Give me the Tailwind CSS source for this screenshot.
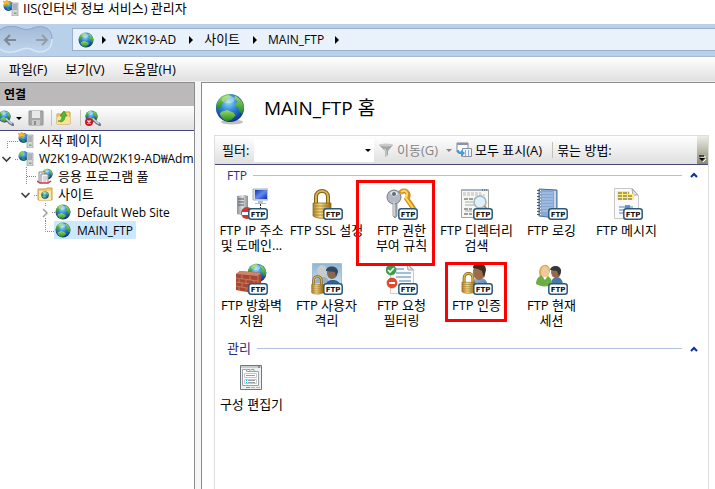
<!DOCTYPE html>
<html lang="ko">
<head>
    <meta charset="UTF-8">
    <meta name="viewport" content="width=device-width, initial-scale=1.0">
    <title>IIS(인터넷 정보 서비스) 관리자</title>
    <script src="https://cdn.jsdelivr.net/npm/@tailwindcss/browser@4"></script>
</head>
<body class="flex flex-col min-h-screen overflow-hidden bg-[#f6f6f6] text-black text-[13px] leading-[15px] font-['Open_Sans','Noto_Sans_CJK_KR',sans-serif]">

    <!-- Shared icon symbols -->
    <svg class="absolute w-0 h-0" aria-hidden="true">
        <defs>
            <radialGradient id="sea" cx="45%" cy="30%" r="70%">
                <stop offset="0" stop-color="#8fdcf8"/>
                <stop offset=".45" stop-color="#2f86d8"/>
                <stop offset="1" stop-color="#102c8c"/>
            </radialGradient>
            <linearGradient id="land" x1="0" y1="0" x2="0" y2="1">
                <stop offset="0" stop-color="#a2dc5a"/>
                <stop offset="1" stop-color="#1c8a28"/>
            </linearGradient>
            <linearGradient id="gold" x1="0" y1="0" x2="1" y2="0">
                <stop offset="0" stop-color="#b08420"/>
                <stop offset=".4" stop-color="#f6dc84"/>
                <stop offset="1" stop-color="#96690f"/>
            </linearGradient>
            <linearGradient id="steel" x1="0" y1="0" x2="1" y2="0">
                <stop offset="0" stop-color="#8a9096"/>
                <stop offset=".5" stop-color="#dde0e3"/>
                <stop offset="1" stop-color="#878d93"/>
            </linearGradient>
            <linearGradient id="screen" x1="0" y1="0" x2="1" y2="1">
                <stop offset="0" stop-color="#1230b8"/>
                <stop offset=".5" stop-color="#5f8cf0"/>
                <stop offset="1" stop-color="#0e2ca8"/>
            </linearGradient>
            <linearGradient id="photo" x1="0" y1="0" x2="0" y2="1">
                <stop offset="0" stop-color="#8fb4d4"/>
                <stop offset="1" stop-color="#d8e8f4"/>
            </linearGradient>
            <linearGradient id="shirt" x1="0" y1="0" x2="1" y2="1">
                <stop offset="0" stop-color="#a8c8e8"/>
                <stop offset="1" stop-color="#3a6a9c"/>
            </linearGradient>
            <linearGradient id="pill" x1="0" y1="0" x2="0" y2="1">
                <stop offset="0" stop-color="#a3bad7"/>
                <stop offset="1" stop-color="#bfd4ec"/>
            </linearGradient>
        </defs>

        <symbol id="globe" viewBox="0 0 32 32">
            <circle cx="16" cy="16" r="15" fill="url(#sea)"/>
            <path d="M3 9C6 4 11 1 15 1l2 3-4 1-1 4-4 2-2 5-4 1C1 14 2 11 3 9z" fill="url(#land)"/>
            <path d="M21 3c5 2 9 7 10 12l-2 7-3-2-1-4-4-3 3-4-3-3z" fill="url(#land)"/>
            <path d="M7 20l6-2 7 3 2 3-5 5-5 1c-4-2-6-5-7-8z" fill="url(#land)"/>
            <ellipse cx="14" cy="7" rx="7" ry="4" fill="#fff" opacity=".35"/>
        </symbol>
        <symbol id="server" viewBox="0 0 16 16">
            <circle cx="5.500" cy="6" r="5" fill="url(#sea)"/>
            <path d="M1 4c1-2 3-3 5-3L5 4 4 6 1 7zM4 8l3 1v2c-2 0-3-1-3-3z" fill="url(#land)"/>
            <path d="M9 3h6v13H9z" fill="#d4d6d8" stroke="#8a8f94" stroke-width=".6"/>
            <path d="M10 5h4M10 7h4M10 9h4" stroke="#777c82" stroke-width=".8"/>
            <path d="M11 12.500h2.500v1.500H11z" fill="#48d040"/>
        </symbol>
        <symbol id="startpage" viewBox="0 0 16 16">
            <use href="#server"/>
            <path d="M0 1l2 .5L4 0l1 2 3 .3-2 1.700-5 1L1 3z" fill="#f8b830" stroke="#d88a10" stroke-width=".4"/>
        </symbol>
        <symbol id="badge" viewBox="0 0 20 12">
            <rect x=".8" y=".8" width="18.400" height="10.400" rx="2.500" fill="#fff" stroke="#2c5878" stroke-width="1.500"/>
            <text x="10" y="9" text-anchor="middle" font-family="DejaVu Sans" font-weight="bold" font-size="7" fill="#111">FTP</text>
        </symbol>
        <symbol id="lock" viewBox="0 0 20 30">
            <path d="M4 15V8c0-8 12-8 12 0v7" fill="none" stroke="#80601a" stroke-width="4"/>
            <path d="M4 15V8c0-8 12-8 12 0v7" fill="none" stroke="#d8b450" stroke-width="2"/>
            <path d="M1 14h18v13c-4 3-14 3-18 0z" fill="url(#gold)" stroke="#80601a" stroke-width=".7"/>
            <path d="M1 17h18M1 20h18M1 23h18M1 26h18" stroke="#96702a" stroke-width=".7"/>
        </symbol>
        <symbol id="plug" viewBox="0 0 16 16">
            <svg x="0" y="0" width="13" height="13"><use href="#globe"/></svg>
            <path d="M8 9l4 4 2 1 2 2" fill="none" stroke="#707a84" stroke-width="3"/>
            <path d="M8 8.500l4 4 2 1" fill="none" stroke="#c8d4dc" stroke-width="1.500"/>
        </symbol>
        <symbol id="crumb" viewBox="0 0 4 8"><path d="M0 0l4 4-4 4z" fill="#000"/></symbol>
        <symbol id="down" viewBox="0 0 6 3"><path d="M0 0h6L3 3z" fill="currentColor"/></symbol>
        <symbol id="up" viewBox="0 0 8 6"><path d="M1 5l3-3 3 3" fill="none" stroke="#0a2ea0" stroke-width="2"/></symbol>
    </svg>

    <!-- Title bar -->
    <header class="flex items-start h-6 bg-white pl-[3px] gap-1">
        <svg class="w-4 h-4"><use href="#startpage"/></svg>
        <h1 class="pt-px">IIS(인터넷 정보 서비스) 관리자</h1>
    </header>

    <!-- Address bar -->
    <div class="flex h-[33px] bg-[#b9d0ea] border-b border-[#a6bad2]">
        <div class="w-[72px] shrink-0 pt-[2px]">
            <svg class="w-[53px] h-[27px]" viewBox="0 0 53 27">
                <path d="M0 4C6-1 15 0 20 2s9 2 13 0 19-4 19 11-14 14-19 11-9-2-13 0-14 4-20-1z" fill="url(#pill)"/>
                <path d="M0 4C6-1 15 0 20 2s9 2 13 0 19-4 19 11" fill="none" stroke="#8ba5c5"/>
                <path d="M52 13c0 15-14 14-19 11s-9-2-13 0-14 4-20-1" fill="none" stroke="#d8e6f5" stroke-width="1.500"/>
                <path d="M16 14H5M10 9l-5 5 5 5" fill="none" stroke="#7f8790" stroke-width="2"/>
                <path d="M36 14h11M42 9l5 5-5 5" fill="none" stroke="#929daa" stroke-width="2"/>
            </svg>
        </div>
        <nav class="flex flex-1 items-center h-[23px] mt-1 pl-[5px] bg-[#e9f1fb] border border-r-0 border-[#9ab0ca]">
            <svg class="w-4 h-4"><use href="#globe"/></svg>
            <svg class="w-1 h-2 ml-2"><use href="#crumb"/></svg>
            <button class="ml-[11px] mb-px text-[12px]">W2K19-AD</button>
            <svg class="w-1 h-2 ml-[13px]"><use href="#crumb"/></svg>
            <button class="ml-[11px] mb-px">사이트</button>
            <svg class="w-1 h-2 ml-[13px]"><use href="#crumb"/></svg>
            <button class="ml-[11px] mb-px text-[12px]">MAIN_FTP</button>
            <svg class="w-1 h-2 ml-[11px]"><use href="#crumb"/></svg>
        </nav>
    </div>

    <!-- Menu bar -->
    <div class="flex items-center gap-[18px] h-[25px] pl-[9px] bg-linear-to-b from-white to-[#e0e0e0] border-b border-[#f0f0f0]">
        <button>파일(F)</button>
        <button>보기(V)</button>
        <button>도움말(H)</button>
    </div>

    <div class="flex flex-1 gap-[6px]">

        <!-- Connections pane -->
        <aside class="w-[195px] shrink-0 overflow-hidden bg-white border-t border-r border-[#8c8c8c]">
            <h2 class="flex items-center h-[23px] pl-1 bg-[#bcb9bb] font-semibold text-[12px]">연결</h2>
            <div class="flex items-center h-[25px] bg-linear-to-b from-white to-[#e2e0e0] border-b border-[#47467a]">
                <button class="flex items-center" aria-label="연결 만들기">
                    <svg class="w-[14px] h-4" viewBox="2 0 14 16"><use href="#plug" width="16" height="16"/></svg>
                    <svg class="w-[6px] h-[3px] ml-[2px]"><use href="#down"/></svg>
                </button>
                <button class="ml-[6px]" aria-label="저장">
                    <svg class="w-4 h-4" viewBox="0 0 16 16">
                        <path d="M1 1h14v14H1z" fill="#a8a8a8" stroke="#949494"/>
                        <path d="M4 1h8v7H4z" fill="#e8e8e8"/>
                        <path d="M4 10h8v5H4z" fill="#c8c8c8"/>
                        <path d="M6 11h2v4H6z" fill="#8e8e8e"/>
                    </svg>
                </button>
                <span class="w-px h-4 ml-[7px] bg-[#c4c2b0]"></span>
                <button class="ml-1" aria-label="위로">
                    <svg class="w-4 h-4" viewBox="0 0 16 16">
                        <path d="M1 4h5l1-2h7v12H1z" fill="#f2d476" stroke="#c8a040"/>
                        <path d="M1 7h13v7H1z" fill="#f8e29a"/>
                        <path d="M2 11c3 0 4-2 4-5H4l4-5 3 5H9c0 5-3 7-7 5z" fill="#52b830" stroke="#34861c" stroke-width=".6"/>
                    </svg>
                </button>
                <span class="w-px h-4 ml-2 bg-[#c4c2b0]"></span>
                <button class="ml-1" aria-label="연결 끊기">
                    <svg class="w-4 h-4" viewBox="0 0 16 16">
                        <use href="#plug"/>
                        <circle cx="4" cy="12" r="4" fill="#c41a20"/>
                        <path d="M2.500 10.500l3 3M5.500 10.500l-3 3" stroke="#fff" stroke-width="1.300"/>
                    </svg>
                </button>
            </div>
            <ul class="whitespace-nowrap">
                <li class="flex items-center h-[18px]">
                    <svg class="w-[18px] h-[18px] shrink-0"><path d="M18 10.500H7.500V18" fill="none" stroke="#888" stroke-dasharray="1 1"/></svg>
                    <svg class="w-4 h-4 shrink-0"><use href="#startpage"/></svg>
                    <a href="#start" class="ml-[5px]">시작 페이지</a>
                </li>
                <li class="flex items-center h-[18px]">
                    <button class="w-[18px] shrink-0" aria-label="W2K19-AD 접기">
                        <svg class="w-[18px] h-[18px]"><path d="M2.500 8l4 4 4-4" fill="none" stroke="#404040" stroke-width="1.700"/><path d="M15 10.500h3" stroke="#888" stroke-dasharray="1 1"/></svg>
                    </button>
                    <svg class="w-4 h-4 shrink-0"><use href="#server"/></svg>
                    <a href="#server-home" class="ml-[5px] text-[12px]">W2K19-AD(W2K19-AD₩Administrator)</a>
                </li>
                <li class="flex items-center h-[18px]">
                    <svg class="w-[37px] h-[18px] shrink-0"><path d="M26.500 0v18M27 9.500h10" fill="none" stroke="#888" stroke-dasharray="1 1"/></svg>
                    <svg class="w-4 h-4 shrink-0" viewBox="0 0 16 16">
                        <svg x="5" y="0" width="11" height="12"><use href="#globe"/></svg>
                        <path d="M2 14V4h6M4 15V6h7v9" fill="#f4f4f8" stroke="#787888" stroke-width=".9"/>
                        <path d="M6 9h4M6 11h4M6 13h3" stroke="#9898a8" stroke-width=".7"/>
                        <path d="M0 13l3 2h8l3-2" fill="none" stroke="#d03a3a" stroke-width="1.500"/>
                    </svg>
                    <a href="#pools" class="ml-[5px]">응용 프로그램 풀</a>
                </li>
                <li class="flex items-center h-[18px]">
                    <button class="w-[37px] shrink-0" aria-label="사이트 접기">
                        <svg class="w-[37px] h-[18px]"><path d="M21.500 8l4 4 4-4" fill="none" stroke="#404040" stroke-width="1.700"/><path d="M34 10.500h3" stroke="#888" stroke-dasharray="1 1"/></svg>
                    </button>
                    <svg class="w-4 h-4 shrink-0" viewBox="0 0 16 16">
                        <path d="M1 3h8l1-1h5v12H1z" fill="#f0cc74" stroke="#c89c48"/>
                        <path d="M2 5h12v9H2z" fill="#fae8b0"/>
                        <svg x="4" y="5" width="8" height="8"><use href="#globe"/></svg>
                    </svg>
                    <a href="#sites" class="ml-[5px]">사이트</a>
                </li>
                <li class="flex items-center h-[18px]">
                    <button class="w-[55px] shrink-0" aria-label="Default Web Site 펼치기">
                        <svg class="w-[55px] h-[18px]"><path d="M43 6l4 4-4 4" fill="none" stroke="#a0a0a0" stroke-width="1.500"/><path d="M45.500 0v3M45.500 15v3M52 9.500h3" stroke="#888" stroke-dasharray="1 1"/></svg>
                    </button>
                    <svg class="w-4 h-4 shrink-0"><use href="#globe"/></svg>
                    <a href="#default" class="ml-[6px] text-[12px]">Default Web Site</a>
                </li>
                <li class="flex items-center h-[18px]">
                    <svg class="w-[54px] h-[18px] shrink-0"><path d="M45.500 0v10.500H54" fill="none" stroke="#888" stroke-dasharray="1 1"/></svg>
                    <a href="#main" class="flex items-center h-[18px] pl-px pr-[3px] bg-[#cce8ff] text-[12px]">
                        <svg class="w-4 h-4 mr-[6px]"><use href="#globe"/></svg>MAIN_FTP
                    </a>
                </li>
            </ul>
        </aside>

        <!-- Feature view -->
        <main class="flex flex-col flex-1 min-w-0 bg-white border-t border-l border-[#8c8c8c] pl-3 pr-[6px]">
            <div class="flex items-center h-[52px] gap-[18px]">
                <svg class="w-8 h-8" viewBox="0 0 32 32">
                    <ellipse cx="18" cy="29" rx="11" ry="2.500" fill="#000" opacity=".25"/>
                    <svg x="1" y="0" width="30" height="30"><use href="#globe"/></svg>
                </svg>
                <h2 class="pb-[2px] text-[19px] leading-6">MAIN_FTP 홈</h2>
            </div>

            <div class="flex-1 border border-b-0 border-[#dedede]">
                <div class="flex items-center h-[29px] whitespace-nowrap bg-linear-to-b from-white to-[#e0dfdf] border-b border-[#47467a]">
                    <label for="filter" class="ml-[7px] w-8 shrink-0">필터:</label>
                    <div class="flex items-center w-[120px] h-[23px] shrink-0 bg-white">
                        <input id="filter" type="text" class="flex-1 min-w-0 h-full px-1 outline-none">
                        <button class="w-[9px]" aria-label="필터 목록"><svg class="w-[6px] h-[3px]"><use href="#down"/></svg></button>
                    </div>
                    <button class="flex items-center ml-1 text-[#858585]">
                        <svg class="w-4 h-4 mr-[3px]" viewBox="0 0 16 16">
                            <path d="M1 3l7-1 7 1-5 6v4l-3 2V9z" fill="#a4a4a4"/>
                            <ellipse cx="8" cy="3" rx="7" ry="1.500" fill="#cacaca"/>
                            <path d="M6 7l2 1v6" fill="none" stroke="#d8d8d8"/>
                        </svg>이동(G)
                        <svg class="w-[6px] h-[3px] ml-2"><use href="#down"/></svg>
                    </button>
                    <button class="flex items-center ml-1">
                        <svg class="w-4 h-4 mr-[3px]" viewBox="0 0 16 16">
                            <path d="M1 1h11v9H1z" fill="#fff" stroke="#7c86a0"/>
                            <path d="M1 1h11v2H1z" fill="#8c94a8"/>
                            <path d="M6.500 6.500h9v8h-9z" fill="#f0f4fa" stroke="#8890a0"/>
                            <path d="M9 9h1M12 9h1M9 11h1M12 11h1M9 13h1M12 13h1" stroke="#3464b4" stroke-width="1.200"/>
                            <path d="M1 8c0 4 2 4 4 4v3l4-4-4-3v2C4 10 3 10 3 8z" fill="#38a0e0"/>
                        </svg>모두 표시(A)
                    </button>
                    <span class="w-px h-4 ml-[10px] bg-[#c4c2b0]"></span>
                    <span class="ml-1">묶는 방법:</span>
                    <button class="flex items-end justify-center w-[11px] h-full ml-auto pb-[2px] bg-linear-to-b from-[#eeeee8] to-[#8c8c74]" aria-label="추가 단추">
                        <svg class="w-[7px] h-[7px]" viewBox="0 0 7 7"><path d="M2 2h5M4 7l3-3" stroke="#fff"/><path d="M0 1h5" stroke="#000" stroke-width="1.200"/><path d="M0 3h6L3 6z" fill="#000"/></svg>
                    </button>
                </div>

                <section>
                    <div class="flex items-center h-5 pl-3 pr-[10px]">
                        <h3 class="text-[12px] text-[#1e3287]">FTP</h3>
                        <span class="flex-1 h-px ml-[6px] mr-2 bg-[#b0bee0]"></span>
                        <button aria-label="FTP 접기"><svg class="w-2 h-[6px]"><use href="#up"/></svg></button>
                    </div>
                    <ul class="flex flex-wrap -ml-px pt-[3px] text-center">
                        <li class="w-[75px] h-[75px]">
                            <a href="#ip" class="flex flex-col items-center">
                                <svg class="w-8 h-8 mb-[3px]" viewBox="0 0 32 32">
                                    <path d="M1 8l8-1 3 1v18l-3 2-8-2z" fill="url(#steel)"/>
                                    <path d="M2 11h6M2 14h6M2 17h6" stroke="#555b60"/>
                                    <path d="M17 1h15v11H17z" fill="#d8dce4" stroke="#a8b0bc"/>
                                    <path d="M19 2h12v9H19z" fill="url(#screen)"/>
                                    <path d="M22 13h5v2h3v1H19v-1h3z" fill="#b8bec8"/>
                                    <path d="M24.500 16v5" stroke="#222" stroke-dasharray="2 1"/>
                                    <circle cx="11" cy="25" r="6" fill="#d03434"/>
                                    <path d="M6 24h8v3H6z" fill="#fff"/>
                                    <svg x="12" y="20" width="20" height="12"><use href="#badge"/></svg>
                                </svg>
                                <span class="whitespace-nowrap">FTP IP 주소<br>및 도메인...</span>
                            </a>
                        </li>
                        <li class="w-[75px] h-[75px]">
                            <a href="#ssl" class="flex flex-col items-center">
                                <svg class="w-8 h-8 mb-[3px]" viewBox="0 0 32 32">
                                    <svg x="1" y="1" width="20" height="30"><use href="#lock"/></svg>
                                    <svg x="12" y="20" width="20" height="12"><use href="#badge"/></svg>
                                </svg>
                                <span class="whitespace-nowrap">FTP SSL 설정</span>
                            </a>
                        </li>
                        <li class="relative w-[75px] h-[75px]">
                            <a href="#auth-rules" class="flex flex-col items-center">
                                <svg class="w-8 h-8 mb-[3px]" viewBox="0 0 32 32">
                                    <path d="M14 5c4-5 11 0 7 6l7 10" fill="none" stroke="#d89018" stroke-width="5"/>
                                    <path d="M15 4c4-3 8 0 5 6l7 10" fill="none" stroke="#ffd860" stroke-width="2"/>
                                    <path d="M7 13h4v15l-2 2-2-2z" fill="#a8aeb8" stroke="#70767e" stroke-width=".7"/>
                                    <circle cx="8" cy="9" r="7" fill="#b4bac4" stroke="#757b84"/>
                                    <path d="M4 5c3-3 7-2 8 1L8 9z" fill="#e8ecf0"/>
                                    <circle cx="8" cy="6" r="2" fill="#606a78"/>
                                    <path d="M8 14v14" stroke="#eef0f4"/>
                                    <svg x="12" y="20" width="20" height="12"><use href="#badge"/></svg>
                                </svg>
                                <span>FTP 권한<br>부여 규칙</span>
                            </a>
                            <span class="absolute -top-2 -left-2 w-[79px] h-[86px] border-3 border-[#ff0000] pointer-events-none"></span>
                        </li>
                        <li class="w-[75px] h-[75px]">
                            <a href="#browse" class="flex flex-col items-center">
                                <svg class="w-8 h-8 mb-[3px]" viewBox="0 0 32 32">
                                    <path d="M.5 1.500h27v28H.5z" fill="#f7f7f4" stroke="#a4a4a0"/>
                                    <path d="M1 1h26v2H1z" fill="#a8b4c0"/>
                                    <path d="M21 2h1M23 2h1M25 2h1" stroke="#304870"/>
                                    <path d="M2 5h18M2 7h22" stroke="#b8b8b0" stroke-dasharray="3 1"/>
                                    <path d="M3 11h11M3 21h8M3 26h8" stroke="#444" stroke-dasharray="4 1"/>
                                    <path d="M4 14h8M4 17h9M4 23h7" stroke="#aaa"/>
                                    <circle cx="19" cy="14" r="6" fill="#e0f0fa" stroke="#9ab4c8" stroke-width="1.500"/>
                                    <path d="M23 18l4 4" stroke="#c89040" stroke-width="2"/>
                                    <svg x="12" y="20" width="20" height="12"><use href="#badge"/></svg>
                                </svg>
                                <span class="whitespace-nowrap">FTP 디렉터리<br>검색</span>
                            </a>
                        </li>
                        <li class="w-[75px] h-[75px]">
                            <a href="#logging" class="flex flex-col items-center">
                                <svg class="w-8 h-8 mb-[3px]" viewBox="0 0 32 32">
                                    <path d="M3 1l18 1v27l-2 1L3 28z" fill="#88a8d4" stroke="#50709c"/>
                                    <path d="M19 3v26" stroke="#dfe6ee" stroke-width="1.500"/>
                                    <path d="M6 5h11M6 8h11M6 11h11M6 14h11M6 17h11M6 20h11M6 23h6" stroke="#b4cae8"/>
                                    <path d="M3 2v27" stroke="#f2f2f2" stroke-width="4" stroke-dasharray="1 2"/>
                                    <path d="M2.500 2v27" stroke="#505860" stroke-width="3" stroke-dasharray="1 2"/>
                                    <svg x="12" y="20" width="20" height="12"><use href="#badge"/></svg>
                                </svg>
                                <span>FTP 로깅</span>
                            </a>
                        </li>
                        <li class="w-[75px] h-[75px]">
                            <a href="#messages" class="flex flex-col items-center">
                                <svg class="w-8 h-8 mb-[3px]" viewBox="0 0 32 32">
                                    <path d="M3.500.5h18l6 7v23h-24z" fill="#fafafa" stroke="#c8c8c8"/>
                                    <path d="M21 1l1 6h5z" fill="#e4e4e4" stroke="#a8a8a8"/>
                                    <path d="M6 3h13v3h4v6H6z" fill="#ffee70"/>
                                    <path d="M7 5h11M7 8h15M7 11h15" stroke="#555" stroke-dasharray="4 1"/>
                                    <path d="M14 17h5v3h-5z" fill="#7098c8"/>
                                    <path d="M8 19h14M8 22h8M8 25h5" stroke="#4884c8"/>
                                    <svg x="12" y="20" width="20" height="12"><use href="#badge"/></svg>
                                </svg>
                                <span>FTP 메시지</span>
                            </a>
                        </li>
                        <li class="w-[75px] h-[75px]">
                            <a href="#firewall" class="flex flex-col items-center">
                                <svg class="w-8 h-8 mb-[3px]" viewBox="0 0 32 32">
                                    <svg x="11" y="0" width="20" height="20"><use href="#globe"/></svg>
                                    <path d="M0 11l4-3 21 2v19l-4 2-21-4z" fill="#a84832"/>
                                    <path d="M0 11l4-3 21 2-3 3z" fill="#d08468"/>
                                    <path d="M0 15l22 3M0 19l22 3M0 23l22 4M6 12v4M14 13v4M3 16v4M10 17v4M18 18v4M6 20v4M14 22v4M3 24v4M10 25v4M22 13v18" fill="none" stroke="#d08c74" stroke-width=".7"/>
                                    <svg x="12" y="20" width="20" height="12"><use href="#badge"/></svg>
                                </svg>
                                <span>FTP 방화벽<br>지원</span>
                            </a>
                        </li>
                        <li class="w-[75px] h-[75px]">
                            <a href="#isolation" class="flex flex-col items-center">
                                <svg class="w-8 h-8 mb-[3px]" viewBox="0 0 32 32">
                                    <path d="M1.500.5h29v26h-29z" fill="url(#photo)" stroke="#a4c0d8"/>
                                    <path d="M4 20c0-5 4-6 8-6s5 2 6 6z" fill="#9ab0c0"/>
                                    <ellipse cx="11" cy="8" rx="5" ry="6" fill="#c8ccc8"/>
                                    <path d="M14 26c0-8 4-9 8-9s8 2 8 9z" fill="#2c6498"/>
                                    <ellipse cx="21" cy="10" rx="5" ry="6" fill="#8a6850"/>
                                    <path d="M15 8c0-6 12-6 12 1l-2 5-1-5z" fill="#304860"/>
                                    <svg x="0" y="12" width="13" height="20"><use href="#lock"/></svg>
                                    <svg x="12" y="20" width="20" height="12"><use href="#badge"/></svg>
                                </svg>
                                <span>FTP 사용자<br>격리</span>
                            </a>
                        </li>
                        <li class="w-[75px] h-[75px]">
                            <a href="#request" class="flex flex-col items-center">
                                <svg class="w-8 h-8 mb-[3px]" viewBox="0 0 32 32">
                                    <path d="M4.500.5h17l6 6v24h-23z" fill="#fafafa" stroke="#ccc"/>
                                    <path d="M21 1l1 6h5z" fill="#e4e4e4" stroke="#a8a8a8"/>
                                    <path d="M10 6h8M10 10h15M10 14h15M13 18h12" stroke="#4884b8"/>
                                    <circle cx="5" cy="7" r="5" fill="#38a048" stroke="#247830" stroke-width=".6"/>
                                    <path d="M2 7l2 2 4-4" fill="none" stroke="#fff" stroke-width="1.700"/>
                                    <circle cx="6" cy="20" r="5" fill="#e84828" stroke="#b83018" stroke-width=".6"/>
                                    <path d="M3 19h6v2H3z" fill="#fff"/>
                                    <svg x="12" y="20" width="20" height="12"><use href="#badge"/></svg>
                                </svg>
                                <span>FTP 요청<br>필터링</span>
                            </a>
                        </li>
                        <li class="relative w-[75px] h-[75px]">
                            <a href="#authentication" class="flex flex-col items-center">
                                <svg class="w-8 h-8 mb-[3px]" viewBox="0 0 32 32">
                                    <path d="M9 26c0-8 5-11 10-11s8 3 8 11z" fill="url(#shirt)"/>
                                    <ellipse cx="18" cy="9" rx="6" ry="8" fill="#9c6c48"/>
                                    <path d="M12 5c0-7 13-7 13 2l-2 8-2-7-4-2z" fill="#3c2c24"/>
                                    <svg x="0" y="9" width="15" height="22"><use href="#lock"/></svg>
                                    <svg x="12" y="20" width="20" height="12"><use href="#badge"/></svg>
                                </svg>
                                <span>FTP 인증</span>
                            </a>
                            <span class="absolute -top-px left-[6px] w-[62px] h-[60px] border-3 border-[#ff0000] pointer-events-none"></span>
                        </li>
                        <li class="w-[75px] h-[75px]">
                            <a href="#sessions" class="flex flex-col items-center">
                                <svg class="w-8 h-8 mb-[3px]" viewBox="0 0 32 32">
                                    <path d="M15 22c0-6 3-8 6-8s6 3 6 8z" fill="#4878a8"/>
                                    <ellipse cx="20" cy="9" rx="5" ry="6" fill="#98684c"/>
                                    <path d="M14 7c1-6 12-5 11 2l-2 4-2-5z" fill="#30383c"/>
                                    <path d="M3 10C3 0 14-1 14 8l-2 6H4z" fill="#d8b048"/>
                                    <path d="M0 21c0-6 4-9 8-9s9 4 8 10c-5 2-11 2-16-1z" fill="#6cae44"/>
                                    <ellipse cx="9" cy="9" rx="4" ry="6" fill="#f0c8a0"/>
                                    <path d="M7 14l2 3 2-3z" fill="#fff"/>
                                    <svg x="12" y="20" width="20" height="12"><use href="#badge"/></svg>
                                </svg>
                                <span>FTP 현재<br>세션</span>
                            </a>
                        </li>
                    </ul>
                </section>

                <section>
                    <div class="flex items-center h-[21px] pl-3 pr-[10px]">
                        <h3 class="text-[#1e3287]">관리</h3>
                        <span class="flex-1 h-px ml-[6px] mr-2 bg-[#b0bee0]"></span>
                        <button aria-label="관리 접기"><svg class="w-2 h-[6px]"><use href="#up"/></svg></button>
                    </div>
                    <ul class="flex flex-wrap -ml-px pt-[3px] text-center">
                        <li class="w-[75px] h-[75px]">
                            <a href="#config" class="flex flex-col items-center">
                                <svg class="w-8 h-8 mb-[3px]" viewBox="0 0 32 32">
                                    <path d="M4.500 3.500h21v24h-21z" fill="#eef0f0" stroke="#70787e"/>
                                    <path d="M5 5h20" stroke="#c8cccf" stroke-width="2"/>
                                    <path d="M22 5h2" stroke="#556"/>
                                    <path d="M6.500 7.500h4v2h12v14h-16z" fill="#fff" stroke="#9aa2a8"/>
                                    <path d="M11 7.500h3v2M15 7.500h3v2" fill="none" stroke="#9aa2a8"/>
                                    <path d="M8.500 11.500h12v4h-12zM8.500 17.500h12v4h-12z" fill="#fff" stroke="#c4c9cc"/>
                                    <path d="M10 13.500h9M12 18.500h7M12 20.500h7" stroke="#9aa0a5"/>
                                    <path d="M10 18.500h1M10 20.500h1M10 25.500h4" stroke="#18b8d8"/>
                                    <path d="M15 25.500h4M20 25.500h4" stroke="#b0b6ba"/>
                                </svg>
                                <span class="whitespace-nowrap">구성 편집기</span>
                            </a>
                        </li>
                    </ul>
                </section>
            </div>
        </main>
    </div>
</body>
</html>
